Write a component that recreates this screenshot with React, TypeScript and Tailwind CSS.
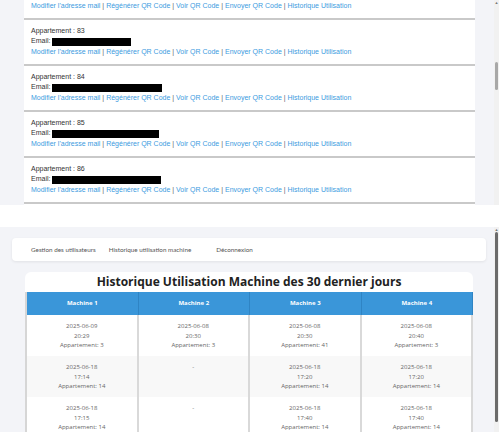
import React from 'react';

const apartments = [
  { num: 83, box: 79 },
  { num: 84, box: 110 },
  { num: 85, box: 107 },
  { num: 86, box: 109 },
];

const links = [
  "Modifier l'adresse mail",
  'Régénérer QR Code',
  'Voir QR Code',
  'Envoyer QR Code',
  'Historique Utilisation',
];

type Cell = { date: string; time: string; apt: string } | null;

const rows: Cell[][] = [
  [
    { date: '2025-06-09', time: '20:29', apt: '3' },
    { date: '2025-06-08', time: '20:30', apt: '3' },
    { date: '2025-06-08', time: '20:30', apt: '41' },
    { date: '2025-06-08', time: '20:40', apt: '3' },
  ],
  [
    { date: '2025-06-18', time: '17:14', apt: '14' },
    null,
    { date: '2025-06-18', time: '17:20', apt: '14' },
    { date: '2025-06-18', time: '17:20', apt: '14' },
  ],
  [
    { date: '2025-06-18', time: '17:15', apt: '14' },
    null,
    { date: '2025-06-18', time: '17:40', apt: '14' },
    { date: '2025-06-18', time: '17:40', apt: '14' },
  ],
];

function Scrollbar({ thumbTop, thumbHeight, dark }: { thumbTop: number; thumbHeight: number; dark?: boolean }) {
  return (
    <div className="w-[5px] shrink-0 bg-[#f1f1f1] flex flex-col items-center">
      <div className="text-[4px] leading-[5px] text-[#777]">▲</div>
      <div
        className={`w-[3px] rounded-full ${dark ? 'bg-[#6b6b6b]' : 'bg-[#a8a8a8]'}`}
        style={{ marginTop: thumbTop, height: thumbHeight }}
      />
    </div>
  );
}

function LinkLine() {
  return (
    <div className="whitespace-nowrap">
      {links.map((l, i) => (
        <span key={l}>
          {i > 0 && <span className="text-[#666]"> | </span>}
          <span className="text-[#3c9be0]">{l}</span>
        </span>
      ))}
    </div>
  );
}

function ApartmentRow({ num, box }: { num: number; box: number }) {
  return (
    <div className="pt-[6px] pb-[6px] px-[7px] border-b-2 border-[#c9c9c9] text-[7px] leading-[10.67px] text-[#333]">
      <div>Appartement : {num}</div>
      <div className="flex items-center">
        <span>Email:&nbsp;</span>
        <span className="inline-block h-[8px] bg-black" style={{ width: box }} />
      </div>
      <LinkLine />
    </div>
  );
}

export default function App() {
  return (
    <div className="w-[499px] h-[432px] overflow-hidden bg-white flex flex-col">
      {/* top screenshot: apartment list */}
      <div className="h-[205px] shrink-0 flex overflow-hidden bg-[#f3f4f8] font-['Liberation_Sans',Arial,sans-serif]">
        <div className="w-[24px] shrink-0" />
        <div className="w-[451px] shrink-0 bg-white overflow-hidden">
          {/* tail of the previous row, scrolled past */}
          <div className="pt-[1px] pb-[6px] px-[7px] border-b-2 border-[#c9c9c9] text-[7px] leading-[10.67px]">
            <LinkLine />
          </div>
          {apartments.map((a) => (
            <ApartmentRow key={a.num} num={a.num} box={a.box} />
          ))}
        </div>
        <div className="flex-1" />
        <Scrollbar thumbTop={57} thumbHeight={28} />
      </div>

      <div className="h-[22px] shrink-0 bg-white" />

      {/* bottom screenshot: machine history */}
      <div className="flex-1 flex overflow-hidden bg-[#f3f4f8] font-['Open_Sans',sans-serif]">
        <div className="flex-1 pl-[12px] pr-[8px] pt-[11px]">
          <div className="h-[23px] bg-white rounded-[4px] shadow-[0_1px_3px_rgba(0,0,0,0.08)] flex items-center pl-[19px] text-[6.3px] text-[#555] font-['Lato',sans-serif]">
            <span>Gestion des utilisateurs</span>
            <span className="ml-[13px]">Historique utilisation machine</span>
            <span className="ml-[25px]">Déconnexion</span>
          </div>

          <div className="mt-[11px] ml-[13px] w-[448px] bg-white rounded-t-[6px] overflow-hidden">
            <div className="h-[20px] flex items-center justify-center text-[12px] font-bold text-[#222]">
              Historique Utilisation Machine des 30 dernier jours
            </div>
            <div className="grid grid-cols-4 border-l-2 border-[#d6d6d6]">
              {['Machine 1', 'Machine 2', 'Machine 3', 'Machine 4'].map((m) => (
                <div
                  key={m}
                  className="h-[23px] bg-[#3a96d9] border-r border-[#2f84c4] flex items-center justify-center text-white text-[6px] font-bold"
                >
                  {m}
                </div>
              ))}
              {rows.map((r, ri) =>
                r.map((c, ci) => (
                  <div
                    key={`${ri}-${ci}`}
                    className={`h-[41px] pt-[7px] border-r-2 border-[#d9d9d9] text-center text-[6px] leading-[9.5px] text-[#666] ${
                      ri % 2 === 1 ? 'bg-[#f8f8f8]' : 'bg-white'
                    }`}
                  >
                    {c ? (
                      <>
                        <div>{c.date}</div>
                        <div>{c.time}</div>
                        <div>Appartement: {c.apt}</div>
                      </>
                    ) : (
                      <div>-</div>
                    )}
                  </div>
                ))
              )}
            </div>
          </div>
        </div>
        <Scrollbar thumbTop={0} thumbHeight={190} dark />
      </div>
    </div>
  );
}
